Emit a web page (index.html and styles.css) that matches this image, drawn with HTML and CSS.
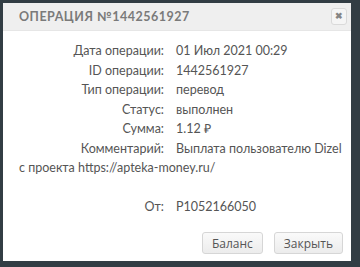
FILE: index.html
```html
<!DOCTYPE html>
<html lang="ru">
<head>
    <meta charset="UTF-8">
    <meta name="viewport" content="width=device-width, initial-scale=1.0">
    <title>Операция</title>
    <link rel="stylesheet" href="styles.css">
</head>
<body>
    <div class="dialog">
        <div class="dialog-header">
            <span class="dialog-title">Операция №1442561927</span>
            <button class="close-button">&#10006;</button>
        </div>
        <div class="dialog-body">
            <div class="line"><span class="label">Дата операции:</span>01 Июл 2021 00:29</div>
            <div class="line"><span class="label">ID операции:</span>1442561927</div>
            <div class="line"><span class="label">Тип операции:</span>перевод</div>
            <div class="line"><span class="label">Статус:</span>выполнен</div>
            <div class="line"><span class="label">Сумма:</span>1.12 &#8381;</div>
            <div class="line"><span class="label">Комментарий:</span>Выплата пользователю Dizel<br>с проекта https://apteka-money.ru/</div>
            <div class="line empty"></div>
            <div class="line"><span class="label">От:</span>P1052166050</div>
        </div>
        <div class="dialog-footer">
            <button class="button">Баланс</button>
            <button class="button">Закрыть</button>
        </div>
    </div>
</body>
</html>
```

FILE: styles.css
```css
* {
    box-sizing: border-box;
    margin: 0;
    padding: 0;
}

body {
    width: 360px;
    height: 267px;
    padding: 3px 9px 0 3px;
    background-color: #323d44;
    font-family: 'Lato', sans-serif;
    overflow: hidden;
}

.dialog {
    width: 348px;
    height: 258px;
    background-color: #fff;
    display: flex;
    flex-direction: column;
}

.dialog-header {
    height: 28px;
    background-color: #efefef;
    border-bottom: 1px solid #e6e6e6;
    display: flex;
    align-items: center;
    justify-content: space-between;
    padding: 0 4px 0 16px;
}

.dialog-title {
    font-size: 12.5px;
    font-weight: bold;
    color: #7a7a7a;
    text-transform: uppercase;
    letter-spacing: 0.5px;
}

.close-button {
    width: 16px;
    height: 17px;
    border: 1px solid #dadada;
    border-radius: 3px;
    background-color: #f5f5f5;
    color: #858585;
    font-size: 9px;
    font-weight: bold;
    line-height: 15px;
    text-align: center;
    cursor: pointer;
}

.dialog-body {
    padding: 10px 8px 0 16px;
    font-size: 12.5px;
    line-height: 19.5px;
    color: #555;
}

.line {
    min-height: 19.5px;
}

.label {
    display: inline-block;
    width: 145px;
    margin-right: 12px;
    text-align: right;
}

.dialog-footer {
    margin-top: auto;
    display: flex;
    justify-content: flex-end;
    gap: 11px;
    padding: 0 8px 7px 0;
}

.button {
    height: 22px;
    padding: 0 9px;
    font-family: 'Open Sans', sans-serif;
    font-size: 12px;
    color: #555;
    border: 1px solid #d6d6d6;
    border-radius: 3px;
    background: linear-gradient(#fafafa, #ececec);
    cursor: pointer;
}
```
